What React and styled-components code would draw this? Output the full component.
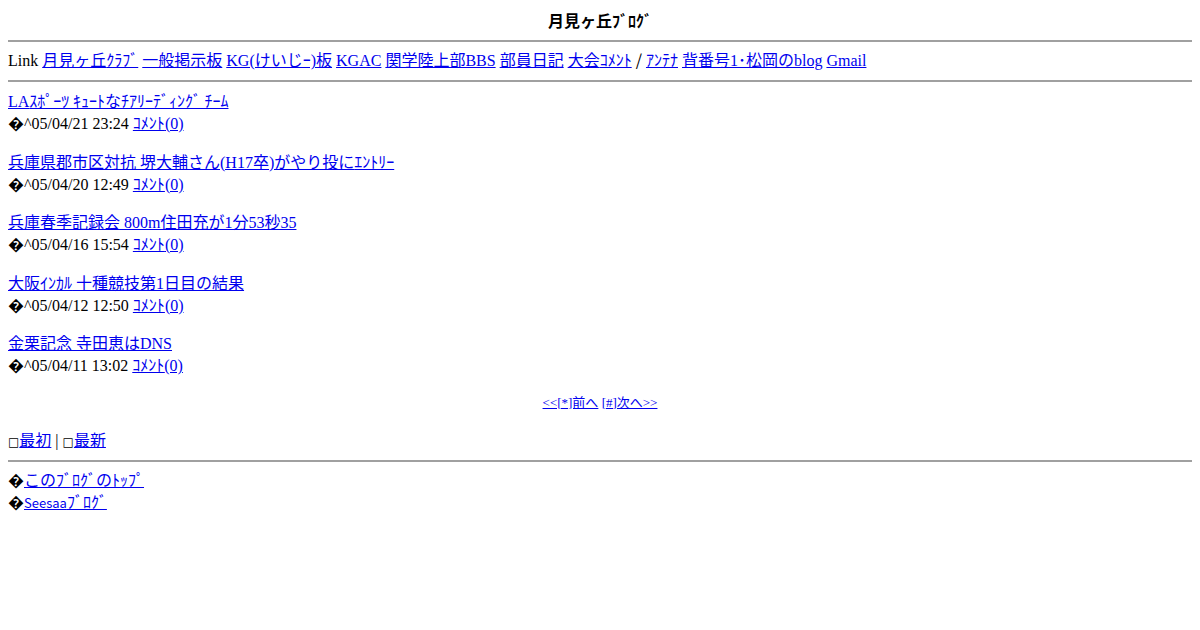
import React from 'react'
import styled, { createGlobalStyle } from 'styled-components';

const GlobalStyle = createGlobalStyle`
body {
  margin: 8px;
  background: #fff;
  color: #000;
  font-family: "Liberation Serif", "Noto Sans CJK JP", serif;
  font-size: 16px;
}
a {
  color: #0000ee;
}
`;

const Title = styled.div`
text-align: center;
font-weight: bold;
font-family: "Noto Sans CJK JP", sans-serif;
font-size: 16px;
line-height: 24px;
height: 24px;
`;

const Rule = styled.hr`
margin: 8px 0;
border: 0;
border-top: 2px solid #a0a0a0;
height: 0;
`;

const LinkBar = styled.div`
line-height: 22px;
height: 22px;
`;

const Entry = styled.div`
margin-bottom: 15.5px;
`;

const EntryTitle = styled.div`
line-height: 23px;
height: 23px;
`;

const EntryMeta = styled.div`
line-height: 22px;
height: 22px;
`;

const Kana = styled.span`
font-family: "Noto Sans CJK JP", sans-serif;
font-size: ${p => p.$size || 16}px;
line-height: 1;
`;

const Pager = styled.div`
text-align: center;
font-size: 13px;
line-height: 20px;
height: 20px;
margin: 0 0 16px;
`;

const NavLine = styled.div`
line-height: 23px;
height: 23px;
`;

const Footer = styled.div`
display: flex;
flex-direction: column;
`;

const FooterLine = styled.div`
line-height: 22px;
height: 22px;
`;

const Box = styled.span`
font-family: "DejaVu Sans", sans-serif;
font-size: 12px;
line-height: 1;
`;

const entries = [
  { title: <>LA<Kana>ｽﾎﾟｰﾂ ｷｭｰﾄなﾁｱﾘｰﾃﾞｨﾝｸﾞ ﾁｰﾑ</Kana></>, date: '05/04/21 23:24' },
  { title: <>兵庫県郡市区対抗 堺大輔さん(H17卒)がやり投に<Kana>ｴﾝﾄﾘｰ</Kana></>, date: '05/04/20 12:49' },
  { title: <>兵庫春季記録会 800m住田充が1分53秒35</>, date: '05/04/16 15:54' },
  { title: <>大阪<Kana>ｲﾝｶﾙ</Kana> 十種競技第1日目の結果</>, date: '05/04/12 12:50' },
  { title: <>金栗記念 寺田恵はDNS</>, date: '05/04/11 13:02' },
];

export default function App() {
  return (
    <>
      <GlobalStyle />
      <Title>月見ヶ丘ﾌﾞﾛｸﾞ</Title>
      <Rule />
      <LinkBar>
        Link <a href="#">月見ヶ丘<Kana>ｸﾗﾌﾞ</Kana></a> <a href="#">一般掲示板</a>{' '}
        <a href="#">KG(けいじｰ)板</a> <a href="#">KGAC</a> <a href="#">関学陸上部BBS</a>{' '}
        <a href="#">部員日記</a> <a href="#">大会<Kana>ｺﾒﾝﾄ</Kana></a> <Kana>/</Kana>{' '}
        <a href="#"><Kana>ｱﾝﾃﾅ</Kana></a> <a href="#">背番号1･松岡のblog</a> <a href="#">Gmail</a>
      </LinkBar>
      <Rule />
      {entries.map((e, i) => (
        <Entry key={i}>
          <EntryTitle><a href="#">{e.title}</a></EntryTitle>
          <EntryMeta>
            �^{e.date} <a href="#"><Kana>ｺﾒﾝﾄ</Kana>(0)</a>
          </EntryMeta>
        </Entry>
      ))}
      <Pager>
        <a href="#">&lt;&lt;[*]前へ</a> <a href="#">[#]次へ&gt;&gt;</a>
      </Pager>
      <NavLine>
        <Box>□</Box><a href="#">最初</a> | <Box>□</Box><a href="#">最新</a>
      </NavLine>
      <Rule />
      <Footer>
        <FooterLine>
          �<a href="#"><Kana>このﾌﾞﾛｸﾞのﾄｯﾌﾟ</Kana></a>
        </FooterLine>
        <FooterLine>
          �<a href="#"><Kana $size={13}>Seesaa</Kana><Kana>ﾌﾞﾛｸﾞ</Kana></a>
        </FooterLine>
      </Footer>
    </>
  )
}
